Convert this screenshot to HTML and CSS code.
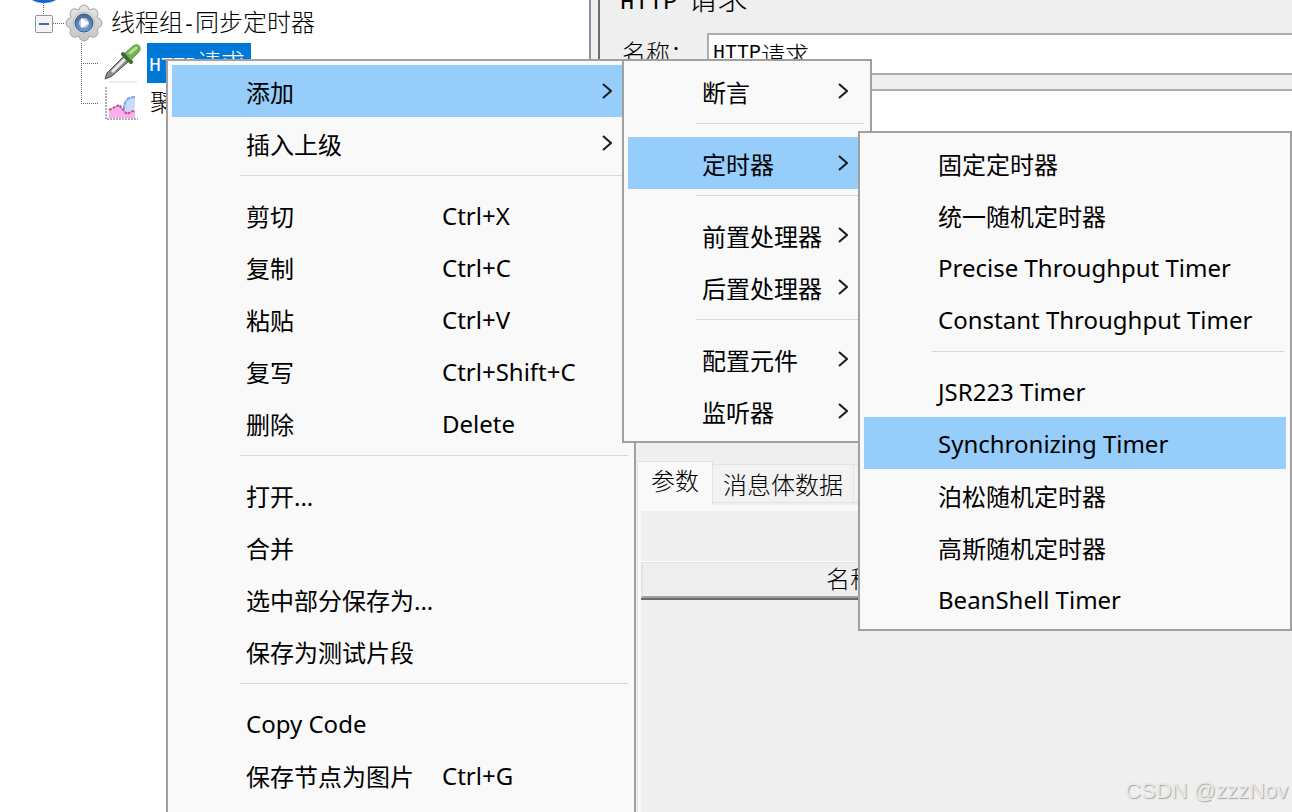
FILE: index.html
```
<!DOCTYPE html>
<html lang="zh-CN">
<head>
  <meta charset="utf-8">
  <meta name="viewport" content="width=device-width, initial-scale=1">
  <title>HTTP请求</title>
  <link rel="stylesheet" href="styles.css">
</head>
<body>
  <div class="window">
    <div class="tree">
      <div class="tree__root">
        <svg width="24" height="3" viewBox="0 0 24 3"><path d="M0 0H24Q19 3 12 3Q5 3 0 0Z" fill="#1467cf"/></svg>
      </div>
      <div class="tree__row">
        <button class="tree__toggle" aria-label="折叠">
          <svg width="65" height="40" viewBox="0 0 65 40">
            <path d="M43.500 0V12M53 20.500H65" stroke="#666" stroke-dasharray="1 1" fill="none"/>
            <rect x="35.500" y="12.500" width="17" height="17" rx="1" fill="#f4f4f4" stroke="#929292"/>
            <path d="M39 21H49" stroke="#4a63b0" stroke-width="2"/>
          </svg>
        </button>
        <svg class="tree__icon" width="38" height="38" viewBox="0 0 38 38">
          <defs>
            <linearGradient id="gear" x1="0" y1="0" x2="0" y2="1">
              <stop offset="0" stop-color="#e6e6e6"/>
              <stop offset="1" stop-color="#c4c4c4"/>
            </linearGradient>
            <linearGradient id="hub" x1="0" y1="0" x2="0" y2="1">
              <stop offset="0" stop-color="#4d658d"/>
              <stop offset="1" stop-color="#6b9fe0"/>
            </linearGradient>
          </defs>
          <path d="M15 3Q19-1 23 3L24 6 27 5Q33 4 33 10L32 13 35 15Q39 19 35 23L32 25 33 28Q33 34 27 33L24 32 23 35Q19 39 15 35L14 32 11 33Q5 34 5 28L6 25 3 23Q-1 19 3 15L6 13 5 10Q5 4 11 5L14 6z" fill="url(#gear)" stroke="#a5a5a5" stroke-linejoin="round"/>
          <circle cx="19" cy="19" r="11" fill="#d8dbe0" stroke="#c2c2c2"/>
          <circle cx="19" cy="19" r="9" fill="url(#hub)" stroke="#39547f"/>
          <circle cx="19" cy="19" r="5" fill="#b9cce6"/>
          <path d="M16 14l8 5-8 5z" fill="#fff"/>
        </svg>
        <span class="tree__text tree__text--group">线程组<span class="latin">-</span>同步定时器</span>
      </div>
      <div class="tree__row">
        <svg class="tree__line" width="103" height="40" viewBox="0 0 103 40">
          <path d="M81.500 0V40M81 20.500H99" stroke="#666" stroke-dasharray="1 1" fill="none"/>
        </svg>
        <svg class="tree__icon" width="40" height="40" viewBox="0 0 40 40">
          <path d="M6 39H34" stroke="#dcdcdc"/>
          <path d="M2 36L4 30 21 13 26 18 9 33z" fill="#8d8d8d" stroke="#4c4c4c"/>
          <path d="M9 29L22 16" stroke="#ececec" stroke-width="3"/>
          <path d="M20 11L28 19" stroke="#3e6b35" stroke-width="4" stroke-linecap="round"/>
          <path d="M22 10L30 3Q35 0 37 4Q38 7 35 10L28 17z" fill="#72b352" stroke="#5f9f4a"/>
          <path d="M27 10L33 5" stroke="#afe093" stroke-width="3" stroke-linecap="round"/>
        </svg>
        <span class="tree__text tree__text--active"><span class="latin">HTTP</span>请求</span>
      </div>
      <div class="tree__row">
        <svg class="tree__line" width="103" height="40" viewBox="0 0 103 40">
          <path d="M81.500 0V20M81 20.500H99" stroke="#666" stroke-dasharray="1 1" fill="none"/>
        </svg>
        <svg class="tree__icon" width="40" height="40" viewBox="0 0 40 40">
          <path d="M32 13Q20 14 20 25L25 31 32 25z" fill="#c7dcfa"/>
          <path d="M32 14Q21 14 21 26" fill="none" stroke="#78a6ef" stroke-width="2" stroke-dasharray="4 1"/>
          <path d="M6 34V28L16 22 24 31 32 27V35H6z" fill="#fbb0ee"/>
          <path d="M6 27L16 22 24 31 32 27" fill="none" stroke="#c9488f" stroke-width="2" stroke-dasharray="3 1"/>
          <path d="M3 4V36H35" fill="none" stroke="#b4aeb4" stroke-width="2" stroke-dasharray="2 1"/>
        </svg>
        <span class="tree__text tree__text--report">聚合报告</span>
      </div>
    </div>

    <div class="main">
      <h1 class="title"><span class="title__latin">HTTP</span>请求</h1>
      <div class="field">
        <label class="field__label" for="name">名称：</label>
        <div class="field__box">
          <label class="latin" for="name">HTTP</label><input class="field__input" id="name" value="请求">
        </div>
      </div>
      <div class="field">
        <label class="field__label" for="comment"></label>
        <div class="field__box field__box--comment"><input class="field__input" id="comment" aria-label="注释"></div>
      </div>

      <div class="params">
        <div class="tabs">
          <button class="tab tab--active">参数</button>
          <button class="tab">消息体数据</button>
          <button class="tab" aria-label="文件上传"></button>
        </div>
        <div class="panel">
          <div class="panel__top"></div>
          <table class="table">
            <tr>
              <th class="table__name">名称</th>
              <th></th>
            </tr>
          </table>
          <div class="panel__body"></div>
        </div>
      </div>
    </div>
  </div>

  <div class="menu menu--edit">
    <button class="item item--active">添加<svg class="arrow" width="10" height="18" viewBox="0 0 10 18"><path d="M1 2L9 9 1 16"/></svg></button>
    <button class="item">插入上级<svg class="arrow" width="10" height="18" viewBox="0 0 10 18"><path d="M1 2L9 9 1 16"/></svg></button>
    <hr class="line">
    <button class="item"><span class="item__name">剪切</span>Ctrl+X</button>
    <button class="item"><span class="item__name">复制</span>Ctrl+C</button>
    <button class="item"><span class="item__name">粘贴</span>Ctrl+V</button>
    <button class="item"><span class="item__name">复写</span>Ctrl+Shift+C</button>
    <button class="item"><span class="item__name">删除</span>Delete</button>
    <hr class="line">
    <button class="item">打开...</button>
    <button class="item">合并</button>
    <button class="item">选中部分保存为...</button>
    <button class="item">保存为测试片段</button>
    <hr class="line">
    <button class="item">Copy Code</button>
    <button class="item"><span class="item__name">保存节点为图片</span>Ctrl+G</button>
  </div>

  <div class="menu menu--add">
    <button class="item">断言<svg class="arrow" width="10" height="18" viewBox="0 0 10 18"><path d="M1 2L9 9 1 16"/></svg></button>
    <hr class="line">
    <button class="item item--active">定时器<svg class="arrow" width="10" height="18" viewBox="0 0 10 18"><path d="M1 2L9 9 1 16"/></svg></button>
    <hr class="line">
    <button class="item">前置处理器<svg class="arrow" width="10" height="18" viewBox="0 0 10 18"><path d="M1 2L9 9 1 16"/></svg></button>
    <button class="item">后置处理器<svg class="arrow" width="10" height="18" viewBox="0 0 10 18"><path d="M1 2L9 9 1 16"/></svg></button>
    <hr class="line">
    <button class="item">配置元件<svg class="arrow" width="10" height="18" viewBox="0 0 10 18"><path d="M1 2L9 9 1 16"/></svg></button>
    <button class="item">监听器<svg class="arrow" width="10" height="18" viewBox="0 0 10 18"><path d="M1 2L9 9 1 16"/></svg></button>
  </div>

  <div class="menu menu--timer">
    <button class="item">固定定时器</button>
    <button class="item">统一随机定时器</button>
    <button class="item">Precise Throughput Timer</button>
    <button class="item">Constant Throughput Timer</button>
    <hr class="line">
    <button class="item">JSR223 Timer</button>
    <button class="item item--active">Synchronizing Timer</button>
    <button class="item">泊松随机定时器</button>
    <button class="item">高斯随机定时器</button>
    <button class="item">BeanShell Timer</button>
  </div>

  <div class="watermark">CSDN @zzzNov</div>
</body>
</html>
```
FILE: styles.css
```
*{
  box-sizing: border-box;
}
body{
  margin: 0;
  height: 100vh;
  overflow: hidden;
  position: relative;
  font-family: "Noto Sans", "Noto Sans CJK SC", sans-serif;
  font-size: 24px;
  color: #000;
  background: #efefef;
}
button, input{
  margin: 0;
  padding: 0;
  border: 0;
  font: inherit;
  color: inherit;
  background: none;
}
svg{
  display: block;
  flex: none;
}
.window{
  display: flex;
  height: 100%;
  font-family: "Noto Sans CJK SC", sans-serif;
  font-weight: 300;
}
.latin{
  font-family: "Liberation Mono", monospace;
  font-size: 20px;
  line-height: 20px;
}

/* 左侧树 */
.tree{
  flex: 0 0 591px;
  background: #fff;
  border-right: 2px solid #8a8e9c;
}
.tree__root{
  height: 3px;
  padding-left: 32px;
}
.tree__row{
  display: flex;
  align-items: center;
  height: 40px;
}
.tree__text{
  height: 40px;
  line-height: 36px;
  white-space: nowrap;
}
.tree__text--group{
  margin-left: 8px;
}
.tree__text--active{
  margin-left: 4px;
  padding: 0 6px 0 2px;
  color: #fff;
  background: #0078d7;
}
.tree__text--report{
  margin-left: 7px;
}

/* 右侧面板 */
.main{
  flex: 1;
  min-width: 0;
  display: flex;
  flex-direction: column;
  margin-left: 7px;
  border-left: 2px solid #6d6d6d;
}
.title{
  display: flex;
  align-items: baseline;
  gap: 10px;
  height: 37px;
  margin: -4px 0 0;
  padding-left: 20px;
  font-size: 30px;
  font-weight: 300;
  line-height: 0;
}
.title__latin{
  font-family: "Liberation Mono", monospace;
  font-size: 24px;
}
.field{
  display: flex;
  margin-bottom: 14px;
  padding-left: 22px;
}
.field__label{
  width: 85px;
  line-height: 38px;
  white-space: nowrap;
}
.field__box{
  flex: 1;
  display: flex;
  align-items: center;
  height: 42px;
  padding: 0 0 2px 4px;
  border: 2px solid #abadb3;
  border-right: 0;
  background: #fff;
}
.field__box--comment{
  height: 60px;
}
.field__input{
  flex: 1;
  height: 36px;
}
.params{
  flex: 1;
  display: flex;
  flex-direction: column;
  margin: 298px 0 0 37px;
}
.tabs{
  display: flex;
  align-items: flex-start;
  height: 44px;
}
.tab{
  min-width: 100px;
  height: 39px;
  margin-top: 3px;
  padding: 0 10px;
  line-height: 36px;
  border: 1px solid #e3e3e3;
  border-left: 0;
  background: #f2f2f2;
}
.tab--active{
  min-width: 0;
  height: 44px;
  margin-top: 0;
  padding: 0 13px 8px;
  border-left: 1px solid #e3e3e3;
  border-bottom: 0;
  background: #f9f9f9;
}
.panel{
  flex: 1;
  display: flex;
  flex-direction: column;
  padding: 6px 0 0 3px;
  border-left: 1px solid #e3e3e3;
  background: #f9f9f9;
}
.panel__top{
  height: 50px;
  background: #efefef;
}
.table{
  width: 100%;
  table-layout: fixed;
  border-collapse: separate;
  border-spacing: 0;
  border-top: 1px solid #fff;
  border-bottom: 2px solid #6b6b6b;
  background: #efefef;
}
.table th{
  height: 36px;
  padding: 0 4px 4px 0;
  font-weight: 300;
  line-height: 28px;
  border-top: 1px solid #e3e3e3;
  border-left: 2px solid #e3e3e3;
  border-bottom: 2px solid #a0a0a0;
}
.table .table__name{
  width: 420px;
}
.panel__body{
  flex: 1;
  background: #efefef;
}

/* 右键菜单 */
.menu{
  position: absolute;
  padding: 4px;
  border: 2px solid #a0a0a0;
  background: #f9f9f9;
}
.menu--edit{
  top: 59px;
  bottom: 0;
  left: 166px;
  width: 470px;
  border-bottom: 0;
}
.menu--add{
  top: 59px;
  left: 622px;
  width: 250px;
}
.menu--timer{
  top: 131px;
  left: 858px;
  width: 434px;
}
.item{
  display: flex;
  align-items: center;
  width: 100%;
  height: 52px;
  padding: 0 18px 0 74px;
  text-align: left;
  white-space: nowrap;
}
.item--active{
  background: #96cdfa;
}
.item__name{
  width: 196px;
}
.arrow{
  margin-left: auto;
  fill: none;
  stroke: #1a1a1a;
  stroke-width: 2;
}
.line{
  height: 1px;
  margin: 6px 2px 13px 68px;
  border: 0;
  background: #d7d7d7;
}

.watermark{
  position: absolute;
  right: 4px;
  bottom: 6px;
  font-family: "Liberation Sans", sans-serif;
  font-size: 22px;
  line-height: 30px;
  color: #e9e9e9;
  text-shadow: 1px 1px 1px #a5a5a5;
}
```
